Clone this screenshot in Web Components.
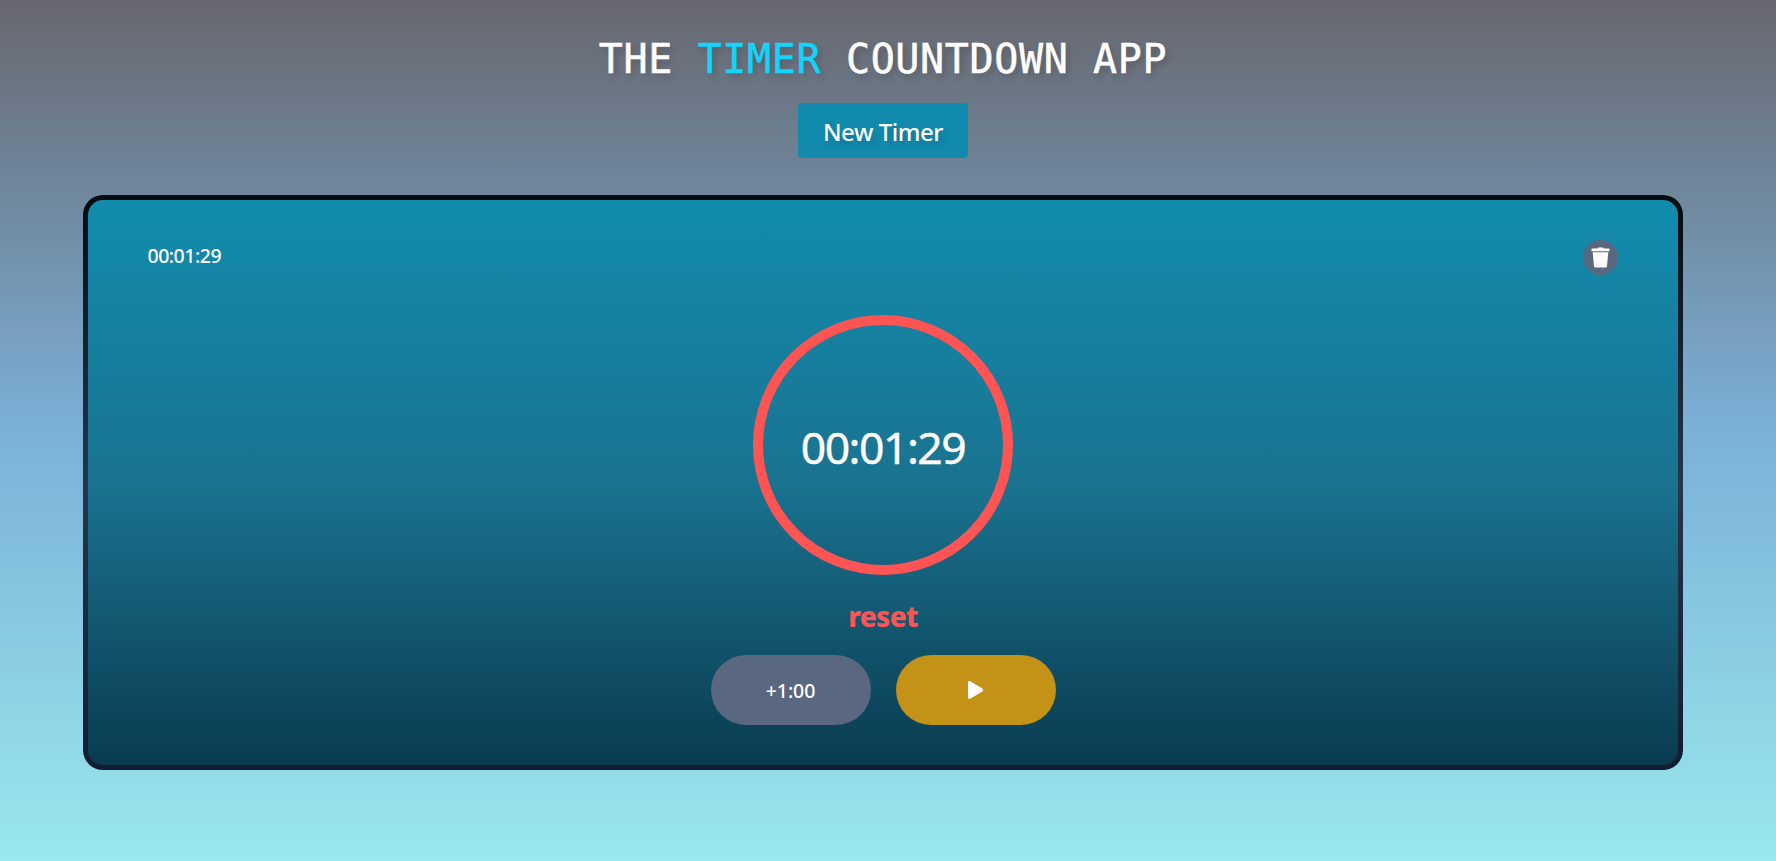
<!DOCTYPE html>
<html lang="en">
<head>
<meta charset="utf-8">
<title>Timer Countdown</title>
<style>
html,body{margin:0;height:100%;overflow:hidden}
body{font-family:"Noto Sans","Open Sans",sans-serif;color:#fff}
</style>
</head>
<body>
<timer-app></timer-app>
<script>
const define = (name, html) => customElements.define(name, class extends HTMLElement {
  constructor() {
    super();
    this.attachShadow({ mode: "open" }).innerHTML = html;
  }
});

define("app-header", `<style>
:host{display:flex;flex-direction:column;align-items:center}
h1{margin:0;padding-top:32px;height:103px;box-sizing:border-box;font:400 40px/54px "DejaVu Sans Mono",monospace;letter-spacing:.63px;white-space:pre;text-shadow:3px 4px 6px rgba(0,0,0,.18);-webkit-text-stroke:.5px currentColor}
span{color:#13d4fb}
</style><h1>THE <span>TIMER</span> COUNTDOWN APP</h1><slot></slot>`);

define("new-button", `<style>
:host{display:block}
button{display:flex;align-items:center;justify-content:center;width:170px;height:55px;border:0;border-radius:4px;background:#118aad;color:#fff;font:500 24px/34px "Noto Sans",sans-serif;letter-spacing:-.45px;padding:3px 0 0;text-shadow:3px 4px 6px rgba(0,0,0,.14)}
</style><button><slot></slot></button>`);

define("trash-button", `<style>
:host{display:block;width:35px;height:35px}
button{display:flex;align-items:center;justify-content:center;width:35px;height:35px;padding:0;border:0;border-radius:50%;background:#5a6780}
svg{display:block}
</style><button aria-label="Delete"><svg width="19" height="21" viewBox="0 0 19 21" fill="#fff"><path d="M1 1.500h5.300L7 .5h5l.7 1H18a.5.5 0 0 1 .5.5v2.200H.5V2a.5.5 0 0 1 .5-.5zM1.700 5.300h15.600L16 19.200q-.1 1.300-1.500 1.300h-10Q3.100 20.500 3 19.200z"/></svg></button>`);

define("timer-ring", `<style>
:host{display:flex;align-items:center;justify-content:center;box-sizing:border-box;width:260px;height:260px;border:10px solid #ff5454;border-radius:50%;font-size:44.500px;line-height:60px;letter-spacing:-1.500px;padding-top:4px;-webkit-text-stroke:.4px currentColor}
</style><slot></slot>`);

define("pill-button", `<style>
:host{display:block}
button{display:flex;align-items:center;justify-content:center;width:160px;height:70px;padding:2px 0 0;border:0;border-radius:35px;background:var(--pill);color:#fff;font:500 19.500px/26px "Noto Sans",sans-serif;letter-spacing:-.1px}
</style><button><slot></slot></button>`);

define("timer-card", `<style>
:host{display:block;box-sizing:border-box;width:1600px;height:575px;padding:5px;border-radius:20px;background:linear-gradient(#060c10,#27354d 50%,#141c33)}
.panel{box-sizing:border-box;height:565px;padding:40px 60px 0;border-radius:15px;background:linear-gradient(#128cae,#1a7390 50%,#0a3b50);display:flex;flex-direction:column;align-items:center}
.top{align-self:stretch;display:flex;justify-content:space-between;height:75px}
.label{font-weight:500;font-size:19.500px;line-height:32px;letter-spacing:-.5px;margin-left:-.5px}
.reset{margin:20px 0 0;height:60px;box-sizing:border-box;font-weight:800;font-size:28px;line-height:42px;letter-spacing:-.7px;color:#ff5454}
.actions{display:flex;gap:25px}
svg{display:block;margin-top:-2px}
</style><div class="panel">
<div class="top"><div class="label"><slot name="label"></slot></div><trash-button></trash-button></div>
<timer-ring><slot></slot></timer-ring>
<div class="reset">reset</div>
<div class="actions"><pill-button style="--pill:#5a6780">+1:00</pill-button><pill-button style="--pill:#c59218"><svg width="16" height="18" viewBox="0 0 16 18" fill="#fff"><path d="M0 1.800C0 .3 1.300-.4 2.600.4l11.800 7q1.600 1.600 0 3.200l-11.800 7C1.300 18.400 0 17.700 0 16.200z"/></svg></pill-button></div>
</div>`);

define("timer-app", `<style>
:host{display:flex;flex-direction:column;align-items:center;box-sizing:border-box;height:861px;padding-right:10px;background:linear-gradient(#67676e,#7bb0d7 50%,#98e8ee)}
timer-card{margin-top:37px}
</style><app-header><new-button>New Timer</new-button></app-header>
<timer-card><span slot="label">00:01:29</span>00:01:29</timer-card>`);
</script>
</body>
</html>
